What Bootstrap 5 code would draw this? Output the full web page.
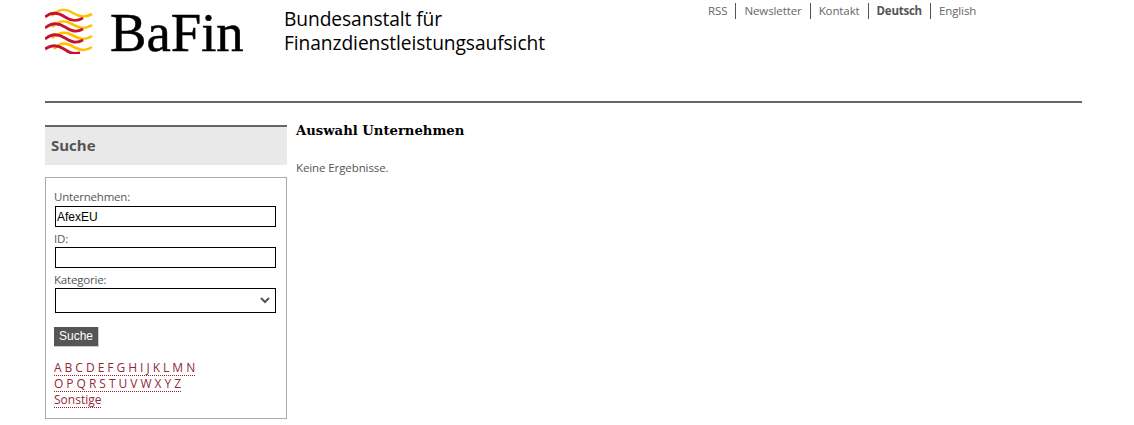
<!DOCTYPE html>
<html lang="de">
<head>
<meta charset="utf-8">
<title>BaFin</title>
<link href="https://cdn.jsdelivr.net/npm/bootstrap@5.3.0/dist/css/bootstrap.min.css" rel="stylesheet">
<style>
html,body{height:425px;overflow:hidden;background:#fff}
body{font-family:"Open Sans","Noto Sans",sans-serif;font-size:11.5px;color:#555;line-height:17px}
.page-wrap{margin:0 52px 0 45px}
.site-head{height:103px;border-bottom:2px solid #666;position:relative}
.brand-word{font-family:"Liberation Serif",serif;font-size:54.7px;line-height:normal;color:#000;margin:1px 0 0 17px;-webkit-text-stroke:.5px #000;width:155px}
.brand-sub{font-size:19.2px;line-height:24px;color:#000;margin-left:19px;margin-top:7px;letter-spacing:-.08px}
.brand-logo{width:48px;height:46px;margin-top:8px;display:block}
.meta-nav{position:absolute;left:663px;top:3px;font-size:11.5px;line-height:16px;letter-spacing:-.1px}
.meta-nav a{color:#666;text-decoration:none;padding:0 8px;border-left:1px solid #555;display:block}
.meta-nav a:first-child{border-left:0;padding-left:0}
.meta-nav a.active-lang{font-weight:700;color:#555;letter-spacing:-.25px}
.content-row{margin-top:22px}
.side-col{width:242px;flex:none}
.side-title{background:#e9e9e9;border-top:2px solid #666;height:40px;font-size:15px;font-weight:700;color:#555;padding:8px 6px 0;line-height:20px}
.search-box{border:1px solid #aaa;margin-top:12px;padding:12px 8px 11px;height:242px}
.search-box label{display:block;line-height:16px;margin:0;color:#555;letter-spacing:-.2px}
.search-box label:first-child{margin:-1px 0 1px}
.search-field{display:block;width:221px;height:21px;border:1px solid #000;border-radius:0;font-family:"Liberation Sans",sans-serif;font-size:12px;color:#000;padding:0 1px;margin:0 0 4px 1px;background:#fff}
.search-select{height:25px;appearance:none;margin-bottom:0;background:#fff url("data:image/svg+xml,%3Csvg xmlns='http://www.w3.org/2000/svg' width='10' height='7'%3E%3Cpath d='M1 1l4 4 4-4' fill='none' stroke='%23555' stroke-width='2'/%3E%3C/svg%3E") no-repeat right 5px center}
.search-btn{display:block;background:#555;border:0;border-right:1px solid #ccc;border-bottom:1px solid #ccc;color:#fff;font-family:"Liberation Sans",sans-serif;font-weight:400;font-size:12px;line-height:19px;height:20px;padding:0 5px;margin-top:14px;border-radius:0}
.az-list{margin-top:13px;line-height:16px;font-size:12px}
.az-list span{display:inline-block;border-bottom:1px dotted #a5182f;height:16px;line-height:15px}
.az-list a{color:#8f2a3a;text-decoration:none;margin-right:3px}
.az-list a:last-child{margin-right:0}
.main-col{padding-left:9px;margin-top:-3px}
.main-col h1{font-family:"DejaVu Serif","Liberation Serif",serif;font-weight:700;font-size:13.2px;line-height:17px;color:#000;margin:0 0 20px}
.main-col p{margin:0;color:#555;letter-spacing:-.1px}
</style>
</head>
<body>
<div class="page-wrap">
  <header class="site-head d-flex align-items-start">
    <svg class="brand-logo" viewBox="0 0 48 46" aria-label="BaFin Logo">
      <g fill="none" stroke="#fdc300" stroke-width="2.6">
        <path d="M7 8C14 0 22 1 28 5S40 10 47 6"/>
        <path d="M7 19C14 12 20 12 27 16S40 22 47 17"/>
        <path d="M7 30C14 24 20 23 27 27S40 33 47 28"/>
        <path d="M9 41C14 35 20 34 27 38S40 44 47 39"/>
      </g>
      <g fill="none" stroke="#c4122f" stroke-width="2.8">
        <path d="M0 9C7 3 14 5 20 9S31 14 38 10"/>
        <path d="M0 20C7 14 14 15 20 19S31 25 38 21"/>
        <path d="M0 31C7 25 14 26 20 30S31 36 38 32"/>
        <path d="M0 41C7 36 13 37 19 41S27 46 35 45"/>
      </g>
    </svg>
    <div class="brand-word">BaFin</div>
    <div class="brand-sub">Bundesanstalt für<br>Finanzdienstleistungsaufsicht</div>
    <nav class="meta-nav d-flex">
      <a href="#">RSS</a>
      <a href="#">Newsletter</a>
      <a href="#">Kontakt</a>
      <a href="#" class="active-lang">Deutsch</a>
      <a href="#">English</a>
    </nav>
  </header>
  <div class="content-row d-flex">
    <aside class="side-col">
      <div class="side-title">Suche</div>
      <form class="search-box">
        <label for="f1">Unternehmen:</label>
        <input id="f1" class="search-field" type="text" value="AfexEU">
        <label for="f2">ID:</label>
        <input id="f2" class="search-field" type="text">
        <label for="f3">Kategorie:</label>
        <select id="f3" class="search-field search-select"><option></option></select>
        <button type="button" class="search-btn">Suche</button>
        <div class="az-list">
          <span><a href="#">A</a><a href="#">B</a><a href="#">C</a><a href="#">D</a><a href="#">E</a><a href="#">F</a><a href="#">G</a><a href="#">H</a><a href="#">I</a><a href="#">J</a><a href="#">K</a><a href="#">L</a><a href="#">M</a><a href="#">N</a></span><br>
          <span><a href="#">O</a><a href="#">P</a><a href="#">Q</a><a href="#">R</a><a href="#">S</a><a href="#">T</a><a href="#">U</a><a href="#">V</a><a href="#">W</a><a href="#">X</a><a href="#">Y</a><a href="#">Z</a></span><br>
          <span><a href="#">Sonstige</a></span>
        </div>
      </form>
    </aside>
    <main class="main-col flex-grow-1">
      <h1>Auswahl Unternehmen</h1>
      <p>Keine Ergebnisse.</p>
    </main>
  </div>
</div>
</body>
</html>
